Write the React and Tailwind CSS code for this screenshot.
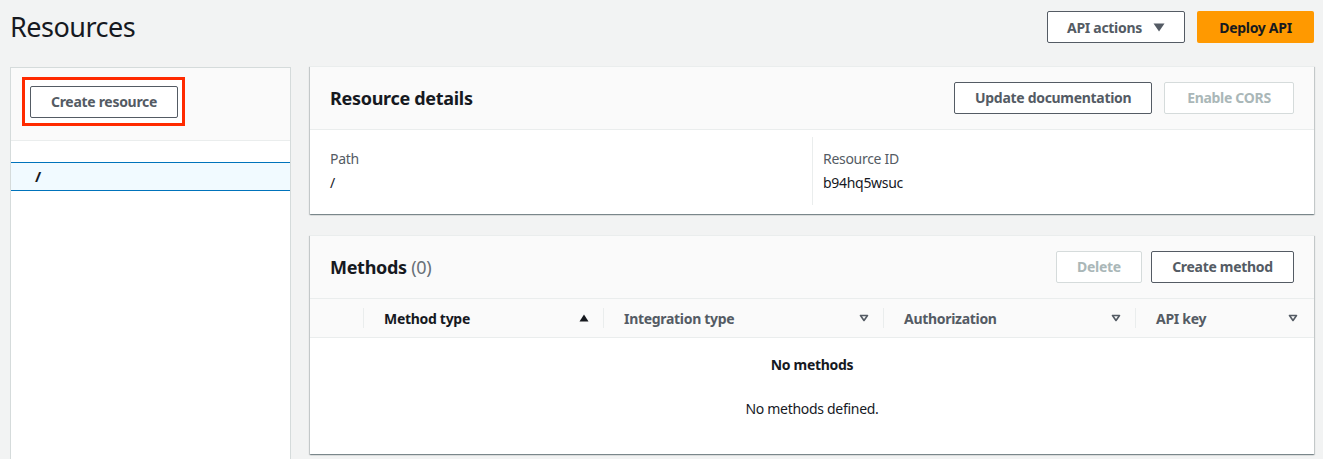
import React from "react";

const font = { fontFamily: "'Noto Sans', Roboto, Arial, sans-serif" };

function Btn({ children, disabled, className = "" }) {
  return (
    <button
      className={
        "h-[32px] whitespace-nowrap rounded-[2px] border px-[20px] text-[14px] font-bold leading-none tracking-[-0.3px] bg-white " +
        (disabled ? "border-[#d5dbdb] text-[#aab7b8] " : "border-[#545b64] text-[#545b64] ") +
        className
      }
    >
      {children}
    </button>
  );
}

function SortDown() {
  return (
    <svg width="10" height="8" viewBox="0 0 10 8" className="shrink-0">
      <path d="M1.5 1.5 H8.5 L5 6.5 Z" fill="none" stroke="#545b64" strokeWidth="1.6" strokeLinejoin="round" />
    </svg>
  );
}

function SortUp() {
  return (
    <svg width="10" height="8" viewBox="0 0 10 8" className="shrink-0">
      <path d="M0.5 7.5 H9.5 L5 0.5 Z" fill="#16191f" />
    </svg>
  );
}

function Th({ label, width, active, last }) {
  return (
    <div className="flex items-center h-full" style={{ width }}>
      <div className="w-px h-[20px] bg-[#eaeded]" />
      <div className={"flex flex-1 items-center justify-between pl-[20px] " + (last ? "pr-[16px]" : "pr-[14px]")}>
        <span className={"text-[14px] font-bold tracking-[-0.3px] whitespace-nowrap " + (active ? "text-[#16191f]" : "text-[#545b64]")}>{label}</span>
        {active ? <SortUp /> : <SortDown />}
      </div>
    </div>
  );
}

const cardShadow =
  "shadow-[0_1px_1px_0_rgba(0,28,36,0.3),1px_1px_1px_0_rgba(0,28,36,0.15),-1px_1px_1px_0_rgba(0,28,36,0.15)]";

export default function App() {
  return (
    <div className="h-[459px] w-[1323px] overflow-hidden bg-[#f2f3f3] text-[#16191f] tracking-[-0.3px]" style={font}>
      <div className="flex items-center justify-between pl-[10px] pr-[9px] pt-[11px]">
        <h1 className="text-[27px] font-normal leading-[32px] text-[#16191f] tracking-[-0.5px]">Resources</h1>
        <div className="flex gap-[12px]">
          <button className="h-[32px] w-[138px] whitespace-nowrap rounded-[2px] border border-[#545b64] bg-white text-[14px] font-bold text-[#545b64] flex items-center justify-center gap-[11px]">
            API actions
            <svg width="12" height="9" viewBox="0 0 12 9">
              <path d="M0.5 0.5 H11.5 L6 8.5 Z" fill="#545b64" />
            </svg>
          </button>
          <button className="h-[32px] w-[117px] whitespace-nowrap rounded-[2px] bg-[#ff9900] text-[14px] font-bold text-[#16191f]">
            Deploy API
          </button>
        </div>
      </div>

      <div className="mt-[23px] flex gap-[19px] pl-[10px] pr-[9px]">
        {/* Left panel */}
        <div className="w-[281px] h-[420px] shrink-0 border-x border-t border-[#d5dbdb] bg-white mt-[1px]">
          <div className="h-[73px] bg-[#fafafa] border-b border-[#eaeded] pl-[11px] pt-[9px]">
            <div className="inline-block border-[3px] border-[#ff2a00] pt-[6px] pb-[5px] pl-[5px] pr-[4px] bg-white">
              <Btn className="w-[148px] px-0 h-[31px]">Create resource</Btn>
            </div>
          </div>
          <div className="mt-[21px] h-[29px] border-y border-[#0073bb] bg-[#f1faff] flex items-center pl-[24px]">
            <span className="text-[15px] font-bold text-[#16191f]">/</span>
          </div>
        </div>

        {/* Right column */}
        <div className="flex-1 flex flex-col gap-[21px]">
          <div className={"bg-white border-t border-[#eaeded] " + cardShadow}>
            <div className="h-[63px] bg-[#fafafa] border-b border-[#eaeded] flex items-center justify-between px-[20px]">
              <h2 className="text-[18px] font-bold text-[#16191f]">Resource details</h2>
              <div className="flex gap-[12px]">
                <Btn className="w-[198px] px-0">Update documentation</Btn>
                <Btn disabled className="w-[130px] px-0">Enable CORS</Btn>
              </div>
            </div>
            <div className="grid grid-cols-2 px-[20px] pt-[7px] pb-[9px]">
              <div className="pt-[11px] pb-[11px]">
                <div className="text-[14px] text-[#545b64] leading-[22px]">Path</div>
                <div className="text-[14px] text-[#16191f] leading-[22px] mt-[2px]">/</div>
              </div>
              <div className="border-l border-[#eaeded] pl-[10px] pt-[11px] pb-[11px]">
                <div className="text-[14px] text-[#545b64] leading-[22px]">Resource ID</div>
                <div className="text-[14px] text-[#16191f] leading-[22px] mt-[2px]">b94hq5wsuc</div>
              </div>
            </div>
          </div>

          <div className={"bg-white border-t border-[#eaeded] h-[219px] " + cardShadow}>
            <div className="h-[62px] bg-[#fafafa] flex items-center justify-between px-[20px]">
              <h2 className="text-[18px] font-bold text-[#16191f]">
                Methods <span className="font-normal text-[#687078]">(0)</span>
              </h2>
              <div className="flex gap-[9px]">
                <Btn disabled className="w-[86px] px-0">Delete</Btn>
                <Btn className="w-[143px] px-0">Create method</Btn>
              </div>
            </div>
            <div className="h-[40px] bg-[#fafafa] border-y border-[#eaeded] flex items-center">
              <div className="w-[53px]" />
              <Th label="Method type" width={240} active />
              <Th label="Integration type" width={280} />
              <Th label="Authorization" width={252} />
              <Th label="API key" width={179} last />
            </div>
            <div className="flex flex-col items-center pt-[16px]">
              <div className="text-[14px] font-bold text-[#16191f] leading-[22px]">No methods</div>
              <div className="text-[14px] text-[#16191f] leading-[22px] mt-[22px]">No methods defined.</div>
            </div>
          </div>
        </div>
      </div>
    </div>
  );
}
